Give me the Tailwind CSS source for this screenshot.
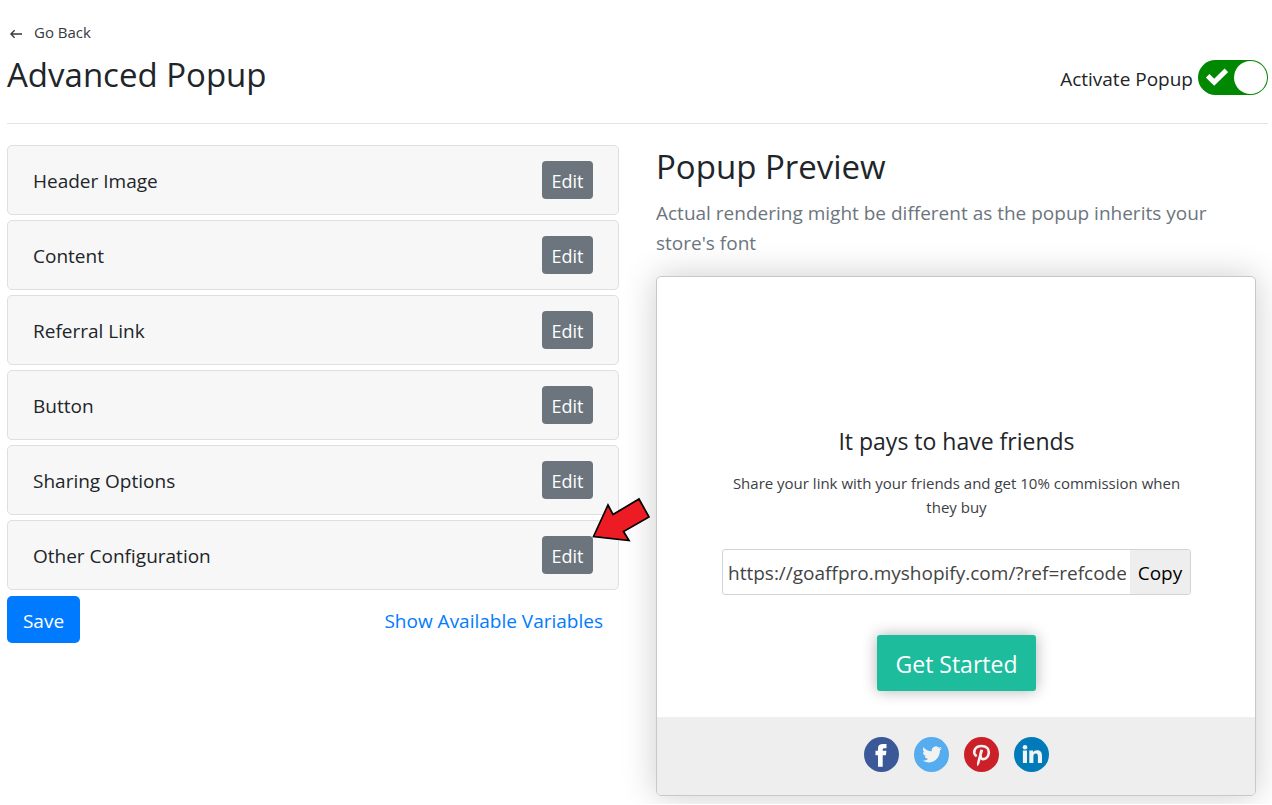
<!DOCTYPE html>
<html lang="en">
<head>
<meta charset="utf-8">
<meta name="viewport" content="width=device-width, initial-scale=1">
<title>Advanced Popup</title>
<script src="https://cdn.jsdelivr.net/npm/@tailwindcss/browser@4"></script>
</head>
<body class="overflow-x-hidden bg-white pl-[7px] pr-1 font-['Segoe_UI','Open_Sans','Noto_Sans',sans-serif] text-[19px] leading-[30px] text-[#212529]">
  <header class="flex items-start justify-between border-b border-[#e2e3e4] pt-5 pb-[25px]">
    <div>
      <a href="#" class="flex items-center gap-3 text-[15px] leading-6 text-[#343a40]">
        <svg class="ml-[3px] mt-[3px] h-[10px] w-3" viewBox="0 0 12 10" fill="none" stroke="currentColor" stroke-width="1.4" aria-hidden="true"><path d="M12 5H1M4.600 1.200L.9 5l3.700 3.800"/></svg>
        Go Back
      </a>
      <h1 class="mt-2 text-[33px] leading-[46px]">Advanced Popup</h1>
    </div>
    <label class="mt-10 flex items-center gap-[5px]">
      <span class="pt-[3px]">Activate Popup</span>
      <span class="relative block h-[35px] w-[70px]">
        <input type="checkbox" role="switch" checked class="peer block h-[35px] w-[70px] appearance-none rounded-full bg-[#bbb] checked:bg-[#008800]">
        <span class="pointer-events-none absolute top-px left-px size-[33px] rounded-full bg-white peer-checked:left-9"></span>
        <svg class="pointer-events-none absolute top-2 left-2 h-[18px] w-[22px]" viewBox="0 0 22 18" fill="none" stroke="#fff" stroke-width="5" aria-hidden="true"><path d="M1.700 7.800l6.500 6.400L20.300 2.300"/></svg>
      </span>
    </label>
  </header>

  <main class="grid grid-cols-[minmax(0,612fr)_minmax(0,600fr)] gap-[37px] pr-3">
    <section class="pt-[21px]">
      <ul class="flex flex-col gap-[5px]">
        <li class="flex h-[70px] items-center justify-between rounded-[5px] border border-[#dfdfdf] bg-[#f7f7f7] px-[25px]"><span class="pt-[2px]">Header Image</span><button type="button" class="h-[38px] w-[51px] rounded bg-[#6c757d] pt-px text-[18px] text-white">Edit</button></li>
        <li class="flex h-[70px] items-center justify-between rounded-[5px] border border-[#dfdfdf] bg-[#f7f7f7] px-[25px]"><span class="pt-[2px]">Content</span><button type="button" class="h-[38px] w-[51px] rounded bg-[#6c757d] pt-px text-[18px] text-white">Edit</button></li>
        <li class="flex h-[70px] items-center justify-between rounded-[5px] border border-[#dfdfdf] bg-[#f7f7f7] px-[25px]"><span class="pt-[2px]">Referral Link</span><button type="button" class="h-[38px] w-[51px] rounded bg-[#6c757d] pt-px text-[18px] text-white">Edit</button></li>
        <li class="flex h-[70px] items-center justify-between rounded-[5px] border border-[#dfdfdf] bg-[#f7f7f7] px-[25px]"><span class="pt-[2px]">Button</span><button type="button" class="h-[38px] w-[51px] rounded bg-[#6c757d] pt-px text-[18px] text-white">Edit</button></li>
        <li class="flex h-[70px] items-center justify-between rounded-[5px] border border-[#dfdfdf] bg-[#f7f7f7] px-[25px]"><span class="pt-[2px]">Sharing Options</span><button type="button" class="h-[38px] w-[51px] rounded bg-[#6c757d] pt-px text-[18px] text-white">Edit</button></li>
        <li class="relative flex h-[70px] items-center justify-between rounded-[5px] border border-[#dfdfdf] bg-[#f7f7f7] px-[25px]"><span class="pt-[2px]">Other Configuration</span><button type="button" class="h-[38px] w-[51px] rounded bg-[#6c757d] pt-px text-[18px] text-white">Edit</button>
          <svg class="absolute -top-[25px] -right-[33px] z-10 h-[46px] w-[60px]" viewBox="0 0 60 46" aria-hidden="true"><path d="M2.500 40.500L17 9l5 9.500L48 3l10 18-25.500 14.500 5.500 9z" fill="#ed1c24" stroke="#000" stroke-width="1.700"/></svg>
        </li>
      </ul>
      <div class="mt-[6px] flex items-center justify-between pr-4">
        <button type="button" class="h-[47px] w-[73px] rounded-[5px] bg-[#007bff] pt-[3px] text-white">Save</button>
        <a href="#" class="pt-[3px] text-[#007bff]">Show Available Variables</a>
      </div>
    </section>

    <section class="pt-5">
      <h2 class="text-[33px] leading-[46px]">Popup Preview</h2>
      <p class="mt-2 text-[#6c757d]">Actual rendering might be different as the popup inherits your store's font</p>
      <div class="mt-[18px] mb-2 rounded-[5px] border border-[#c8c8c8] bg-white text-center shadow-[0_0_35px_rgba(0,0,0,0.2)]">
        <div class="pt-[147px] pr-16 pb-[26px] pl-[65px]">
          <h3 class="text-[23px] leading-[34px]">It pays to have friends</h3>
          <p class="mt-[13px] text-[15px] leading-6 text-[#3c4044]">Share your link with your friends and get 10% commission when they buy</p>
          <div class="mt-[30px] flex h-[46px] overflow-hidden rounded-[3px] border border-[#ced4da]">
            <input type="text" aria-label="Referral link" readonly value="https://goaffpro.myshopify.com/?ref=refcode" class="mr-1 min-w-0 flex-1 pt-px pl-[5px] text-[#444]">
            <button type="button" class="w-[60px] bg-[#eee] pt-px text-black">Copy</button>
          </div>
          <button type="button" class="mt-10 h-14 w-[159px] rounded-[3px] bg-[#1dbc9c] pt-px text-[23px] text-white shadow-[0_0_15px_rgba(0,0,0,0.3)]">Get Started</button>
        </div>
        <div class="flex h-[78px] items-center justify-center gap-[15px] rounded-b-[4px] bg-[#eee] pb-1">
          <a href="#" aria-label="Facebook"><svg class="size-[35px]" viewBox="0 0 35 35"><circle cx="17.500" cy="17.500" r="17.500" fill="#3b5998"/><path fill="#fff" d="M14 29.700V18.200h-2.500v-4.400H14v-2.500C14 8.200 15.900 7 19 7h3.500v4.200h-2.200c-1.200 0-1.600.5-1.600 1.500v1.100h3.700l-.5 4.400h-3.200v11.500z"/></svg></a>
          <a href="#" aria-label="Twitter"><svg class="size-[35px]" viewBox="0 0 35 35"><circle cx="17.500" cy="17.500" r="17.500" fill="#55acee"/><path fill="#f1f2f2" transform="translate(8.200 9.200) scale(.82)" d="M23.953 2.570a10 10 0 0 1-2.825.775 4.958 4.958 0 0 0 2.163-2.723c-.951.555-2.005.959-3.127 1.184a4.920 4.920 0 0 0-8.384 4.482C7.690 6.095 4.067 4.130 1.640 1.162a4.822 4.822 0 0 0-.666 2.475c0 1.710.87 3.213 2.188 4.096a4.904 4.904 0 0 1-2.228-.616v.06a4.923 4.923 0 0 0 3.946 4.827 4.996 4.996 0 0 1-2.212.085 4.936 4.936 0 0 0 4.604 3.417 9.867 9.867 0 0 1-6.102 2.105c-.39 0-.779-.023-1.170-.067a13.995 13.995 0 0 0 7.557 2.209c9.053 0 13.998-7.496 13.998-13.985 0-.21 0-.42-.015-.63A9.935 9.935 0 0 0 24 2.590z"/></svg></a>
          <a href="#" aria-label="Pinterest"><svg class="size-[35px]" viewBox="0 0 35 35"><circle cx="17.500" cy="17.500" r="17.500" fill="#cb2027"/><path fill="none" stroke="#f1f2f2" stroke-width="2.600" stroke-linecap="round" d="M11.800 18.500C8.500 15.300 10.600 9 17.600 9c4.900 0 7.400 2.900 7.200 6.300-.2 4-2.600 6.800-5.300 6.800-2 0-3-1.200-2.800-2.800"/><path fill="#f1f2f2" d="M16.300 12.500l2.900.6-3.700 13c-.4 1.300-1.100 2.100-2.200 3.200-.5-1.400-.4-2.800-.2-4z"/></svg></a>
          <a href="#" aria-label="LinkedIn"><svg class="size-[35px]" viewBox="0 0 35 35"><circle cx="17.500" cy="17.500" r="17.500" fill="#007ab9"/><g fill="#f1f2f2"><circle cx="11" cy="10.200" r="2.300"/><path d="M8.900 13.600H13v12.500H8.900zM15.300 13.600h3.900v1.700c.7-1.200 2.100-2 3.900-2 3.900 0 4.900 2.500 4.900 6v6.800h-4.100v-6.200c0-1.600-.2-3.300-2.100-3.300s-2.400 1.500-2.400 3.200v6.300h-4.100z"/></g></svg></a>
        </div>
      </div>
    </section>
  </main>
</body>
</html>
